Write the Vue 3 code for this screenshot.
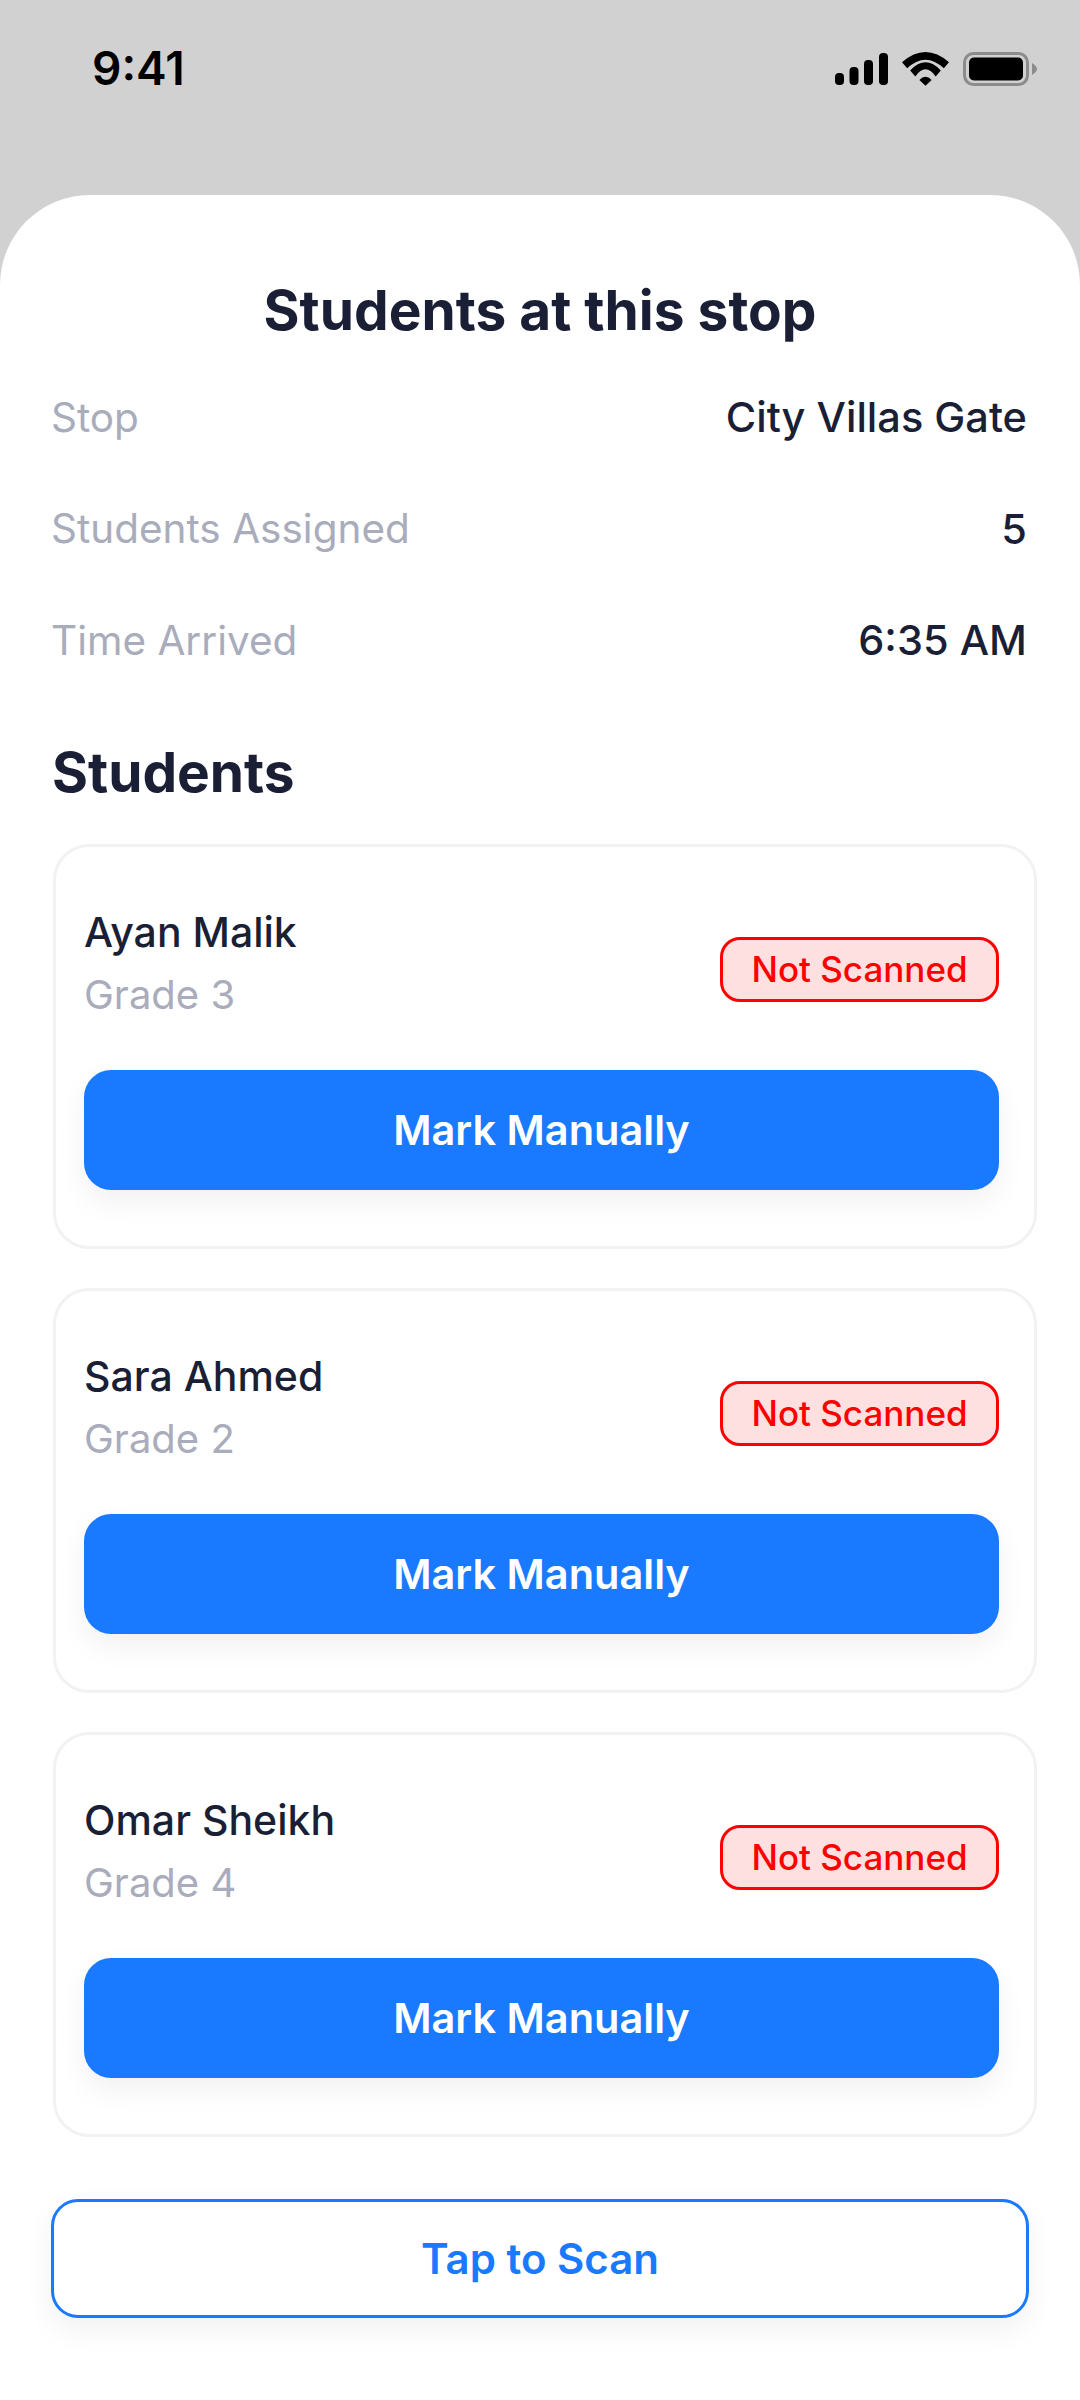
<template>
  <div class="screen">
    <!-- status bar -->
    <div class="status">
      <span class="time">9:41</span>
      <div class="status-icons">
        <svg class="signal" width="53" height="32" viewBox="0 0 53 32">
          <rect x="0" y="20" width="9" height="12" rx="4" />
          <rect x="14.500" y="14" width="9" height="18" rx="4" />
          <rect x="29" y="7" width="9" height="25" rx="4" />
          <rect x="44" y="0" width="9" height="32" rx="4" />
        </svg>
        <svg class="wifi" width="47" height="34" viewBox="0 0 46 33.300">
          <path d="M0 10 Q23 -10 46 10 L41 16 Q23 -1 5 16 Z" />
          <path d="M8 18 Q23 2 38 18 L33 24 Q23 10 13 24 Z" />
          <path d="M17 27.500 Q23 21 29 27.500 L23 33 Z" />
        </svg>
        <svg class="battery" width="74" height="34" viewBox="0 0 74 34">
          <rect x="1.500" y="1.500" width="63" height="31" rx="9" fill="none" stroke="#8c8c8c" stroke-width="3" />
          <rect x="6" y="5.500" width="54" height="23" rx="5" fill="#000" />
          <path d="M69 11 C72 13 74 15 74 17 C74 19 72 21 69 23 Z" fill="#8c8c8c" />
        </svg>
      </div>
    </div>

    <div class="sheet">
      <h1 class="title">Students at this stop</h1>

      <div class="info">
        <div v-for="row in info" :key="row.label" class="info-row">
          <span class="info-label">{{ row.label }}</span>
          <span class="info-value">{{ row.value }}</span>
        </div>
      </div>

      <h2 class="section">Students</h2>

      <div class="cards">
        <div v-for="s in students" :key="s.name" class="card">
          <div class="card-top">
            <div class="who">
              <div class="name">{{ s.name }}</div>
              <div class="grade">{{ s.grade }}</div>
            </div>
            <span class="badge">Not Scanned</span>
          </div>
          <button class="mark">Mark Manually</button>
        </div>
      </div>

      <button class="scan">Tap to Scan</button>
    </div>
  </div>
</template>

<script setup>
const info = [
  { label: 'Stop', value: 'City Villas Gate' },
  { label: 'Students Assigned', value: '5' },
  { label: 'Time Arrived', value: '6:35 AM' }
]

const students = [
  { name: 'Ayan Malik', grade: 'Grade 3' },
  { name: 'Sara Ahmed', grade: 'Grade 2' },
  { name: 'Omar Sheikh', grade: 'Grade 4' }
]
</script>

<style>
body {
  margin: 0;
}
</style>

<style scoped>
.screen {
  width: 1080px;
  height: 2400px;
  background: #d1d1d1;
  font-family: Inter, "Liberation Sans", sans-serif;
  color: #1a1f36;
  overflow: hidden;
}

.status {
  height: 195px;
  box-sizing: border-box;
  padding: 41px 0 0 92px;
  display: flex;
  justify-content: space-between;
  align-items: flex-start;
}

.time {
  font-size: 46px;
  line-height: 54px;
  font-weight: 600;
  color: #000;
}

.status-icons {
  display: flex;
  align-items: center;
  gap: 14px;
  padding: 11px 43px 0 0;
}

.signal,
.wifi {
  fill: #000;
}

.sheet {
  height: 2205px;
  box-sizing: border-box;
  background: #fff;
  border-radius: 90px 90px 0 0;
  padding: 84px 52px 0;
}

.title {
  margin: 0;
  font-size: 55px;
  line-height: 62px;
  font-weight: 700;
  text-align: center;
}

.info {
  margin-top: 53px;
  display: flex;
  flex-direction: column;
  gap: 65.500px;
}

.info-row {
  display: flex;
  justify-content: space-between;
  align-items: center;
  height: 46px;
  padding-right: 1px;
}

.info-label {
  margin-left: -1px;
  font-size: 40.500px;
  color: #a9acbb;
}

.info-value {
  font-size: 41.500px;
  font-weight: 500;
}

.section {
  margin: 78px 0 0;
  font-size: 55px;
  line-height: 62px;
  font-weight: 700;
}

.cards {
  margin-top: 41px;
  display: flex;
  flex-direction: column;
  gap: 39px;
  width: 984px;
  margin-left: 1px;
}

.card {
  height: 405px;
  box-sizing: border-box;
  border: 3px solid #f2f2f2;
  border-radius: 36px;
  padding: 60px 35px 0 28px;
}

.card-top {
  display: flex;
  justify-content: space-between;
  align-items: center;
  height: 125px;
}

.who {
  padding-bottom: 12px;
}

.name {
  font-size: 41px;
  line-height: 48px;
  font-weight: 500;
}

.grade {
  margin-top: 15px;
  font-size: 40px;
  line-height: 48px;
  color: #a9acbb;
}

.badge {
  width: 279px;
  height: 65px;
  box-sizing: border-box;
  border: 3px solid #ff0000;
  border-radius: 20px;
  background: #ffe0e0;
  color: #ff0000;
  font-size: 35px;
  font-weight: 500;
  padding-bottom: 2px;
  display: flex;
  align-items: center;
  justify-content: center;
}

.mark {
  display: block;
  width: 100%;
  height: 120px;
  margin-top: 38px;
  border: 0;
  border-radius: 27px;
  background: #197aff;
  color: #fff;
  font-family: inherit;
  font-size: 41.500px;
  font-weight: 600;
  box-shadow: 0 12px 30px rgba(0, 0, 0, 0.06);
}

.scan {
  display: block;
  width: 978px;
  height: 119px;
  margin: 62px 0 0 -1px;
  box-sizing: border-box;
  border: 3px solid #197aff;
  border-radius: 27px;
  background: #fff;
  color: #197aff;
  font-family: inherit;
  font-size: 42px;
  font-weight: 600;
  box-shadow: 0 12px 30px rgba(0, 0, 0, 0.06);
}
</style>
